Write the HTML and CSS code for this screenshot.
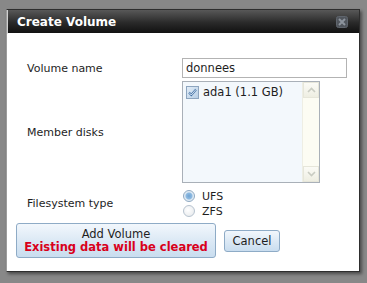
FILE: index.html
```html
<!DOCTYPE html>
<html lang="en">
<head>
    <meta charset="UTF-8">
    <title>Create Volume</title>
    <link rel="stylesheet" href="styles.css">
</head>
<body>
    <div class="dialog">
        <div class="titlebar">
            <span class="title">Create Volume</span>
            <span class="close">
                <svg width="12" height="12" viewBox="0 0 12 12">
                    <rect x="0.5" y="0.5" width="11" height="11" rx="2" fill="#50555c" stroke="#5f656d"/>
                    <path d="M3 3 L9 9 M9 3 L3 9" stroke="#8d949d" stroke-width="2"/>
                </svg>
            </span>
        </div>
        <div class="content">
            <div class="form">
                <label class="label" for="name">Volume name</label>
                <input class="text-input" id="name" type="text" value="donnees">

                <span class="label">Member disks</span>
                <div class="listbox">
                    <div class="list-items">
                        <div class="list-item">
                            <svg class="check" width="13" height="13" viewBox="0 0 13 13">
                                <defs>
                                    <linearGradient id="cb" x1="0" y1="0" x2="1" y2="1">
                                        <stop offset="0" stop-color="#e4eef8"/>
                                        <stop offset="1" stop-color="#b5cde4"/>
                                    </linearGradient>
                                </defs>
                                <rect x="0.5" y="0.5" width="12" height="12" fill="url(#cb)" stroke="#8da5bf"/>
                                <path d="M3 6.5 L5.3 9 L10 3.5" fill="none" stroke="#3d6fa6" stroke-width="2"/>
                                <path d="M3 6.5 L5.3 9 L10 3.5" fill="none" stroke="#ffffff" stroke-width="0.8"/>
                            </svg>
                            <span>ada1 (1.1 GB)</span>
                        </div>
                    </div>
                    <div class="scrollbar">
                        <div class="scroll-btn">
                            <svg width="9" height="6" viewBox="0 0 9 6"><path d="M1 5 L4.5 1.5 L8 5" fill="none" stroke="#c9ccc2" stroke-width="1.6"/></svg>
                        </div>
                        <div class="scroll-track"></div>
                        <div class="scroll-btn">
                            <svg width="9" height="6" viewBox="0 0 9 6"><path d="M1 1 L4.5 4.5 L8 1" fill="none" stroke="#c9ccc2" stroke-width="1.6"/></svg>
                        </div>
                    </div>
                </div>

                <span class="label label-fs">Filesystem type</span>
                <div class="radios">
                    <div class="radio-row">
                        <span class="radio selected"></span>
                        <span>UFS</span>
                    </div>
                    <div class="radio-row">
                        <span class="radio"></span>
                        <span>ZFS</span>
                    </div>
                </div>
            </div>
            <div class="buttons">
                <button class="btn btn-add">
                    <span>Add Volume</span>
                    <span class="warning">Existing data will be cleared</span>
                </button>
                <button class="btn btn-cancel">Cancel</button>
            </div>
        </div>
    </div>
</body>
</html>
```
FILE: styles.css
```css
body {
    margin: 0;
    padding: 0;
    background-color: #888888;
    font-family: "DejaVu Sans", Verdana, sans-serif;
    font-size: 11px;
    color: #1e1e1e;
    height: 283px;
    overflow: hidden;
}

.dialog {
    width: 354px;
    margin: 9px 0 0 6px;
    box-sizing: border-box;
    border: 1px solid #2e2e2e;
    border-left-color: #9c9c9c;
    background-color: #ffffff;
    box-shadow: 2px 2px 3px rgba(0, 0, 0, 0.45);
}

.titlebar {
    height: 23px;
    display: flex;
    align-items: center;
    justify-content: space-between;
    padding: 0 11px 0 9px;
    background: linear-gradient(#585858, #2a2a2a 55%, #111111);
    border-bottom: 1px solid #ffffff;
    border-left: 1px solid #d0d0d0;
}

.title {
    color: #ffffff;
    font-weight: bold;
    font-size: 12px;
    padding-top: 1px;
}

.close {
    display: flex;
    padding-top: 1px;
}

.content {
    padding: 24px 0 13px 0;
}

.form {
    display: grid;
    grid-template-columns: 155px 165px;
    row-gap: 3px;
    padding-left: 20px;
}

.label {
    align-self: center;
}

.label-fs {
    padding-top: 3px;
}

.text-input {
    height: 20px;
    box-sizing: border-box;
    margin: 0;
    padding: 0 3px;
    border: 1px solid #b3b3b3;
    font-family: inherit;
    font-size: 11.5px;
    color: #1e1e1e;
}

.listbox {
    width: 138px;
    height: 102px;
    box-sizing: border-box;
    border: 1px solid #a9b0b8;
    background-color: #f3f8fc;
    display: flex;
}

.list-items {
    flex: 1;
    padding: 3px 0 0 3px;
}

.list-item {
    display: flex;
    align-items: center;
    gap: 4px;
    font-size: 11.5px;
}

.scrollbar {
    width: 16px;
    display: flex;
    flex-direction: column;
    background-color: #fcfcf3;
    border-left: 1px solid #eeeee4;
}

.scroll-btn {
    height: 16px;
    display: flex;
    align-items: center;
    justify-content: center;
    background: linear-gradient(#fbfbf6, #eeeee2);
    border: 1px solid #e6e6da;
    box-sizing: border-box;
}

.scroll-track {
    flex: 1;
}

.radios {
    display: flex;
    flex-direction: column;
    gap: 1px;
    padding: 3px 0 0 1px;
}

.radio-row {
    display: flex;
    align-items: center;
    gap: 7px;
    height: 14px;
}

.radio {
    width: 12px;
    height: 12px;
    box-sizing: border-box;
    border-radius: 50%;
    border: 1px solid #b7c3cf;
    background: radial-gradient(circle at 40% 40%, #ffffff, #e4e7ea);
}

.radio.selected {
    border-color: #8fa9c2;
    background: radial-gradient(circle, #6fa3d2 0, #8fbbe2 3px, #dbe8f3 4px, #f4f7fa 6px);
}

.buttons {
    display: flex;
    align-items: center;
    gap: 8px;
    padding-left: 9px;
    margin-top: 5px;
}

.btn {
    font-family: inherit;
    color: #1e1e1e;
    border: 1px solid #8eabc6;
    border-radius: 3px;
    background: linear-gradient(#f2f7fc, #dce9f5 50%, #c9ddef);
    margin: 0;
    cursor: pointer;
}

.btn-add {
    width: 200px;
    height: 35px;
    font-size: 11.5px;
    display: flex;
    flex-direction: column;
    align-items: center;
    justify-content: center;
    line-height: 13px;
    padding: 0;
}

.warning {
    color: #d9001b;
    font-weight: bold;
    font-size: 11.5px;
}

.btn-cancel {
    width: 56px;
    height: 22px;
    font-size: 11.5px;
    padding: 0;
}
```
